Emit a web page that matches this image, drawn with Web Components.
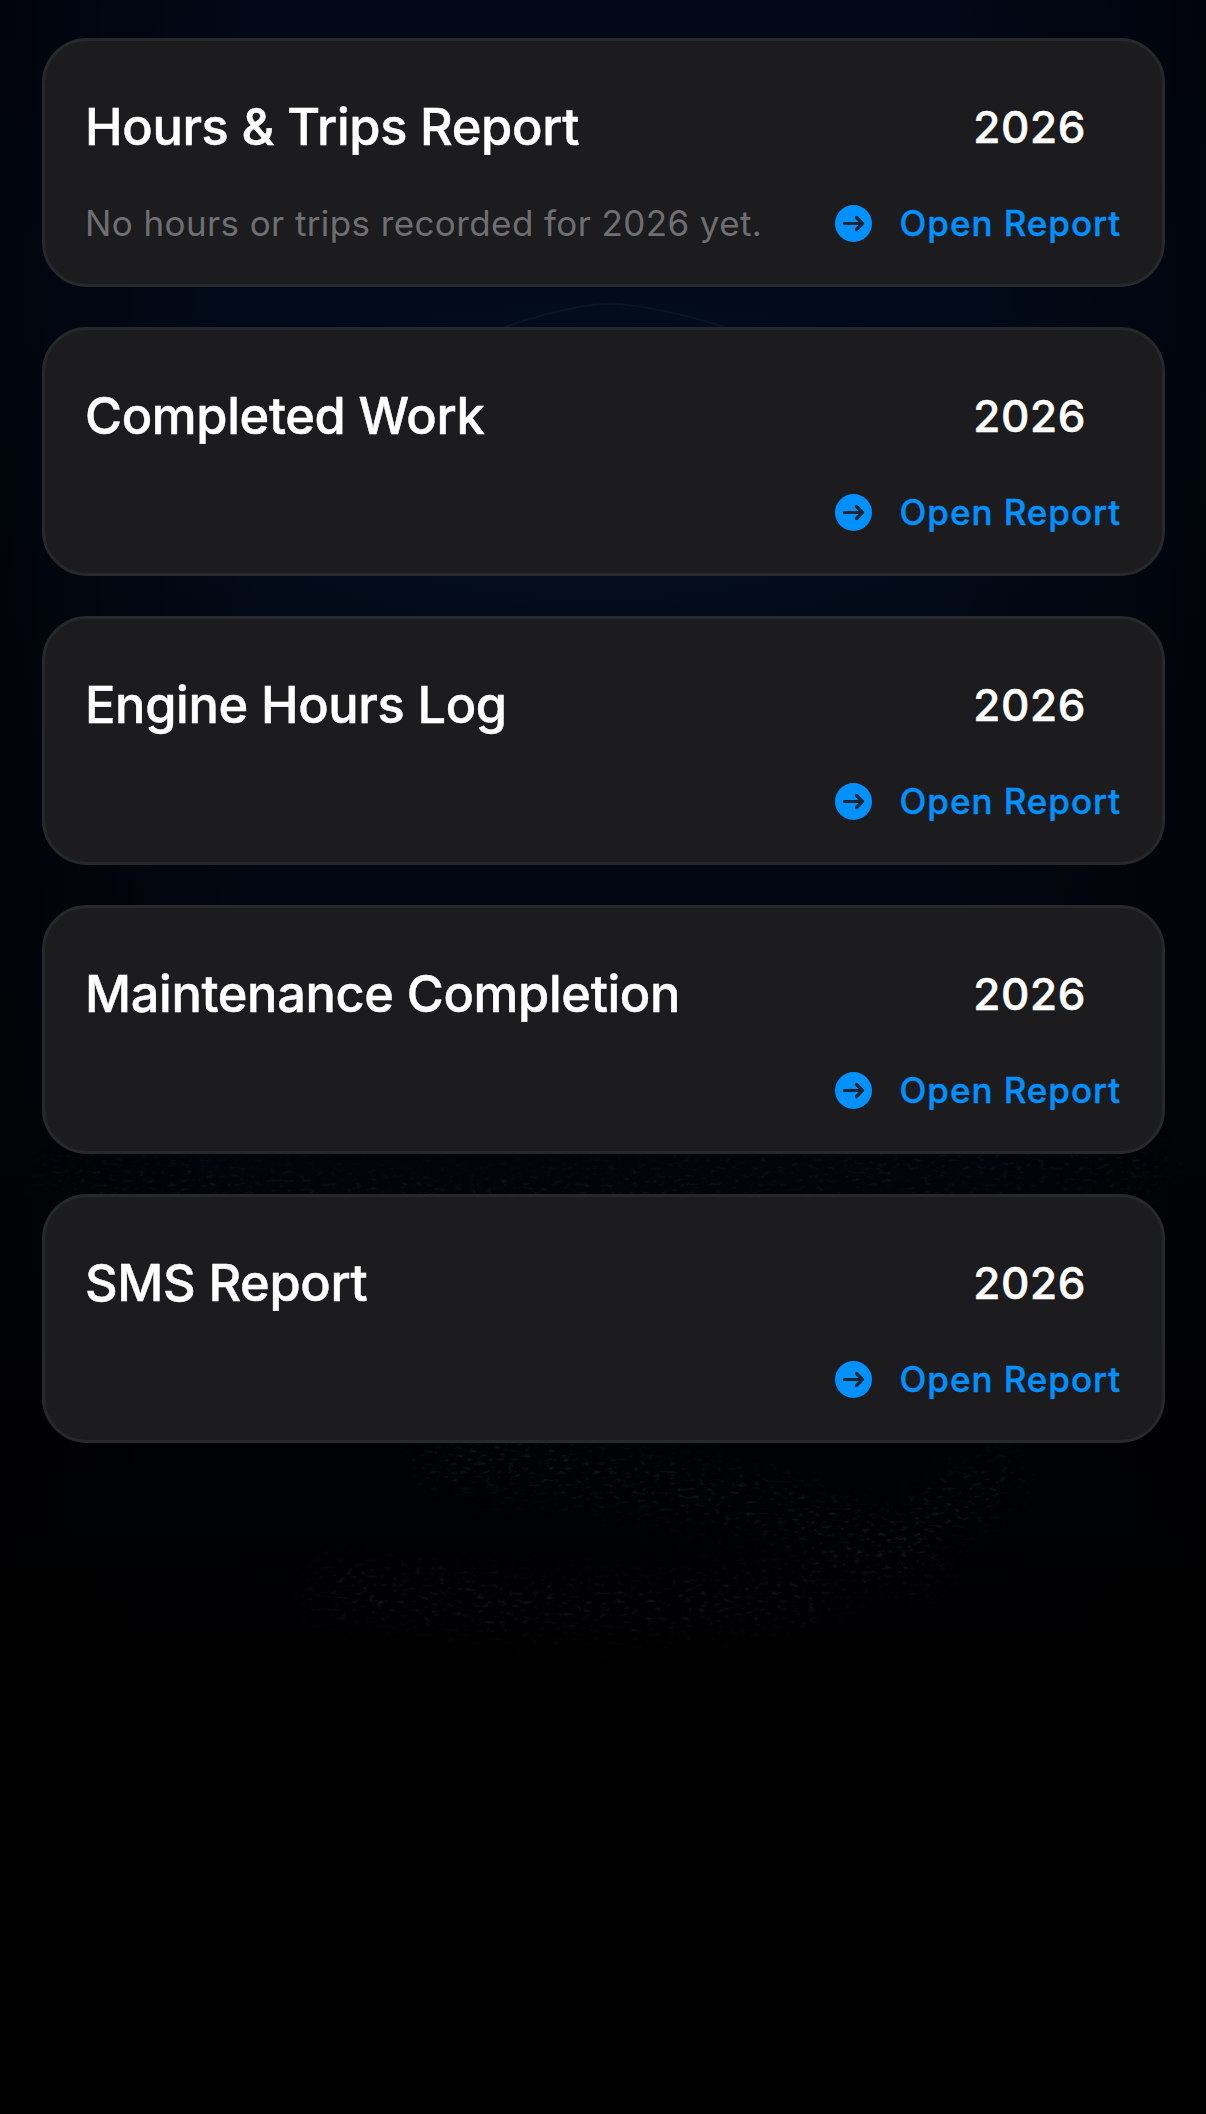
<!DOCTYPE html>
<html lang="en"><head><meta charset="utf-8"><title>Reports</title>
<style>
html,body{margin:0;padding:0;background:#000}
body{width:1206px;height:2114px;overflow:hidden;font-family:Inter,"Liberation Sans",sans-serif}
</style></head><body>
<report-page>
<report-card title-text="Hours &amp; Trips Report" year="2026" note="No hours or trips recorded for 2026 yet."></report-card>
<report-card title-text="Completed Work" year="2026"></report-card>
<report-card title-text="Engine Hours Log" year="2026"></report-card>
<report-card title-text="Maintenance Completion" year="2026"></report-card>
<report-card title-text="SMS Report" year="2026"></report-card>
</report-page>
<template id="page-t"><style>
:host{display:flex;flex-direction:column;gap:40px;box-sizing:border-box;width:1206px;height:2114px;padding:38px 41px 0 42px;position:relative;
background:
 linear-gradient(90deg,rgba(0,0,0,.5),transparent 22%,transparent 78%,rgba(0,0,0,.5)),
 radial-gradient(ellipse 520px 200px at 600px 480px,rgba(12,30,52,.42),transparent 100%),
 linear-gradient(180deg,#020817 0,#020a1a 300px,#020814 700px,#02060e 1000px,#010308 1300px,#000 1700px);}
.tex{position:absolute;left:0;top:0;width:1206px;height:2114px;pointer-events:none}
::slotted(*){position:relative}
</style><svg class="tex" viewBox="0 0 1206 2114" aria-hidden="true">
<defs><filter id="n" x="0" y="0" width="100%" height="100%"><feTurbulence type="fractalNoise" baseFrequency=".13 .24" numOctaves="2" seed="11"/><feColorMatrix values="0 0 0 0 .62 0 0 0 0 .66 0 0 0 0 .7 3.4 0 0 0 -1.9"/></filter>
<filter id="b" x="-20%" y="-40%" width="140%" height="180%"><feGaussianBlur stdDeviation="20"/></filter>
<mask id="m" maskUnits="userSpaceOnUse" x="0" y="0" width="1206" height="2114"><g filter="url(#b)" fill="none" stroke="#fff" stroke-width="44" stroke-linecap="round">
<path d="M60 1170Q340 1210 600 1190T1150 1165" stroke-opacity=".7"/>
<path d="M440 1460Q620 1480 740 1500T920 1570"/>
<path d="M330 1590Q620 1620 820 1590"/>
<path d="M850 1560L1000 1480"/>
</g></mask></defs>
<rect width="1206" height="2114" filter="url(#n)" mask="url(#m)" opacity=".12"/>
<path d="M505 327C560 308 590 304 610 304S670 310 725 327" fill="none" stroke="#17263a" stroke-width="2" opacity=".35"/>
</svg><slot></slot></template>
<template id="card-t"><style>
:host{display:block;box-sizing:border-box;height:249px;border-radius:45px;background:#1c1c1e;border:3px solid #27282b;padding:56px 41px 0 40px;color:#fff;font-family:Inter,"Liberation Sans",sans-serif}
.top,.bottom{display:flex;justify-content:space-between}
.top{align-items:center;height:60px}
.bottom{align-items:center;height:40px;margin-top:46px}
h2{margin:0;font-size:50.5px;line-height:60px;font-weight:500;letter-spacing:-.35px;-webkit-text-stroke:.5px #fff}
.year{font-size:44px;line-height:60px;font-weight:500;margin-right:35px;letter-spacing:.6px;-webkit-text-stroke:.5px #fff}
.note{font-size:35px;font-weight:400;color:#6e6e73;letter-spacing:.4px;line-height:40px}
.open{display:flex;align-items:center;gap:28px;margin-left:auto;color:#0091ff;font-size:35px;font-weight:500;letter-spacing:.95px;line-height:40px;-webkit-text-stroke:.4px #0091ff}
svg{display:block;flex:none;-webkit-text-stroke:0}
</style><div class="top"><h2></h2><span class="year"></span></div>
<div class="bottom"><span class="note"></span><span class="open"><svg width="37" height="37" viewBox="0 0 37 37" aria-hidden="true"><circle cx="18.5" cy="18.5" r="18.5" fill="#0091ff"/><path d="M9.5 18.5H27.5M21.5 12.5l6 6-6 6" fill="none" stroke="#1b2530" stroke-width="3.2" stroke-linecap="round" stroke-linejoin="round"/></svg>Open Report</span></div></template>
<script>
customElements.define('report-page',class extends HTMLElement{constructor(){super();this.attachShadow({mode:'open'}).append(document.getElementById('page-t').content.cloneNode(true))}});
customElements.define('report-card',class extends HTMLElement{constructor(){super();this.attachShadow({mode:'open'}).append(document.getElementById('card-t').content.cloneNode(true))}
connectedCallback(){const s=this.shadowRoot;s.querySelector('h2').textContent=this.getAttribute('title-text');s.querySelector('.year').textContent=this.getAttribute('year');const n=s.querySelector('.note');const t=this.getAttribute('note');if(t)n.textContent=t;else n.remove()}});
</script></body></html>
